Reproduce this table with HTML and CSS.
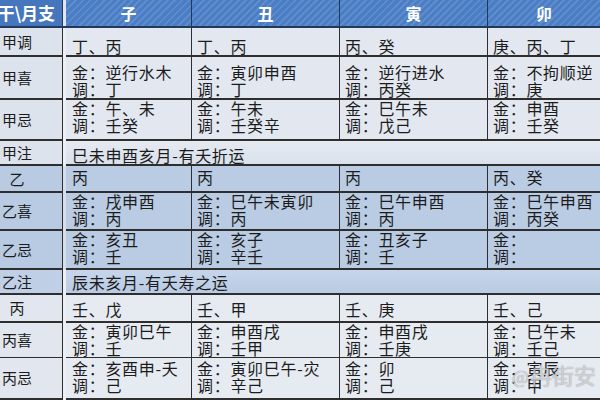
FILE: index.html
```html
<!DOCTYPE html>
<html lang="zh">
<head>
<meta charset="utf-8">
<title>十干月支表</title>
<link rel="stylesheet" href="styles.css">
</head>
<body>
<div class="sheet">
  <div class="row head h28">
    <div class="lab hlab">干\月支</div><div class="gap hgap"></div>
    <div class="c c1">子</div><div class="c c2">丑</div><div class="c c3">寅</div><div class="c c4">卯</div>
  </div>

  <div class="row jia h29 p10">
    <div class="lab">甲调</div><div class="gap"></div>
    <div class="c c1">丁、丙</div><div class="c c2">丁、丙</div><div class="c c3">丙、癸</div><div class="c c4">庚、丙、丁</div>
  </div>
  <div class="row jia h43 p7">
    <div class="lab">甲喜</div><div class="gap"></div>
    <div class="c c1">金：逆行水木<br>调：丁</div><div class="c c2">金：寅卯申酉<br>调：丁</div><div class="c c3">金：逆行进水<br>调：丙癸</div><div class="c c4">金：不拘顺逆<br>调：庚</div>
  </div>
  <div class="row jia h41 p0">
    <div class="lab">甲忌</div><div class="gap"></div>
    <div class="c c1">金：午、未<br>调：壬癸</div><div class="c c2">金：午未<br>调：壬癸辛</div><div class="c c3">金：巳午未<br>调：戊己</div><div class="c c4">金：申酉<br>调：壬癸</div>
  </div>
  <div class="row jiazhu h25 p6">
    <div class="lab">甲注</div><div class="gap"></div>
    <div class="c span">巳未申酉亥月-有夭折运</div>
  </div>

  <div class="row yi h27 p3">
    <div class="lab">乙</div><div class="gap"></div>
    <div class="c c1">丙</div><div class="c c2">丙</div><div class="c c3">丙</div><div class="c c4">丙、癸</div>
  </div>
  <div class="row yi h38 p0">
    <div class="lab">乙喜</div><div class="gap"></div>
    <div class="c c1">金：戌申酉<br>调：丙</div><div class="c c2">金：巳午未寅卯<br>调：丙</div><div class="c c3">金：巳午申酉<br>调：丙</div><div class="c c4">金：巳午申酉<br>调：丙癸</div>
  </div>
  <div class="row yi h39 p0">
    <div class="lab">乙忌</div><div class="gap"></div>
    <div class="c c1">金：亥丑<br>调：壬</div><div class="c c2">金：亥子<br>调：辛壬</div><div class="c c3">金：丑亥子<br>调：壬</div><div class="c c4">金：<br>调：</div>
  </div>
  <div class="row yizhu h25 p4">
    <div class="lab">乙注</div><div class="gap"></div>
    <div class="c span">辰未亥月-有夭寿之运</div>
  </div>

  <div class="row bing h28 p6">
    <div class="lab">丙</div><div class="gap"></div>
    <div class="c c1">壬、戊</div><div class="c c2">壬、甲</div><div class="c c3">壬、庚</div><div class="c c4">壬、己</div>
  </div>
  <div class="row bing h35 p0">
    <div class="lab">丙喜</div><div class="gap"></div>
    <div class="c c1">金：寅卯巳午<br>调：壬</div><div class="c c2">金：申酉戌<br>调：壬甲</div><div class="c c3">金：申酉戌<br>调：壬庚</div><div class="c c4">金：巳午未<br>调：壬己</div>
  </div>
  <div class="row bing h42 p2">
    <div class="lab">丙忌</div><div class="gap"></div>
    <div class="c c1">金：亥酉申-夭<br>调：己</div><div class="c c2">金：寅卯巳午-灾<br>调：辛己</div><div class="c c3">金：卯<br>调：己</div><div class="c c4">金：寅辰<br>调：甲</div>
  </div>

  <div class="mark"><span class="mark-at">@</span>冉街安</div>
</div>
</body>
</html>
```

FILE: styles.css
```css
* { box-sizing: border-box; margin: 0; padding: 0; }

html, body {
  width: 600px;
  height: 400px;
  overflow: hidden;
  background: #e6ebf2;
}

.sheet {
  position: relative;
  width: 600px;
  height: 400px;
  overflow: hidden;
  font-family: "Noto Sans CJK SC", "Noto Sans", sans-serif;
  color: #1c1c1c;
}

.row {
  display: grid;
  grid-template-columns: 63px 3px 126px 148px 148px 112px;
}

.h25 { height: 25px; }
.h27 { height: 27px; }
.h28 { height: 28px; }
.h29 { height: 29px; }
.h35 { height: 35px; }
.h38 { height: 38px; }
.h39 { height: 39px; }
.h41 { height: 41px; }
.h42 { height: 42px; }
.h43 { height: 43px; }

.lab {
  border-right: 1px solid #2e2e2e;
  border-bottom: 2px solid #2e2e2e;
  display: flex;
  align-items: center;
  justify-content: center;
  padding-right: 28px;
  font-size: 15px;
  line-height: 16px;
  white-space: nowrap;
}

.gap {
  background: #eceff4;
}

.c {
  border-bottom: 2px solid #2e2e2e;
  border-right: 1px solid #2e2e2e;
  padding-left: 5px;
  font-size: 16px;
  line-height: 17px;
  letter-spacing: 0.7px;
  white-space: nowrap;
  overflow: visible;
}
.c1 { padding-left: 6px; }
.c4 { border-right: none; }
.span { grid-column: 3 / 7; border-right: none; padding-left: 6px; }

.p0 .c { padding-top: 0; }
.p2 .c { padding-top: 2px; }
.p3 .c { padding-top: 3px; }
.p4 .c { padding-top: 4px; }
.p6 .c { padding-top: 6px; }
.p7 .c { padding-top: 7px; }
.p10 .c { padding-top: 10px; }

/* header */
.head {
  background: repeating-linear-gradient(135deg, #4a7dc3 0px, #4a7dc3 3px, #5d8dcd 3px, #5d8dcd 5px);
}
.head .c, .head .lab {
  border-bottom: 2px solid #23395a;
  border-right: 1px solid #23395a;
  color: #ffffff;
  font-weight: 700;
  font-size: 16px;
  line-height: 26px;
  text-align: center;
  padding: 0;
  letter-spacing: 0;
}
.head .c4 { border-right: none; }
.head .lab {
  justify-content: flex-end;
  padding-right: 7px;
  font-size: 17px;
  background: #4677be;
  overflow: visible;
}
.hgap { background: #dfe6ef; border-bottom: 2px solid #23395a; }

/* row colours */
.jia .lab { background: #dde3ed; }
.jia .c { background: #e3e8f0; }
.jiazhu .lab { background: #dde3ed; }
.jiazhu .c { background: linear-gradient(#e6eaf1, #d9e1ec); }

.yi .lab { background: #b8cbe3; }
.yi .c { background: #bacce3; }
.yi .gap { background: #d6deea; }
.yizhu .lab { background: #bfcfe6; }
.yizhu .c { background: linear-gradient(#c6d5ea, #b9cbe4); }

.bing .lab { background: #e2e7ef; }
.bing .c { background: #e6ebf2; }

/* watermark overlay */
.mark {
  position: absolute;
  left: 512px;
  top: 362px;
  font-size: 22px;
  line-height: 24px;
  color: rgba(238, 241, 245, 0.7);
  text-shadow: 0 0 1px rgba(80, 80, 80, 0.7);
  white-space: nowrap;
  pointer-events: none;
}
.mark-at { font-size: 18px; margin-right: 1px; }
```
